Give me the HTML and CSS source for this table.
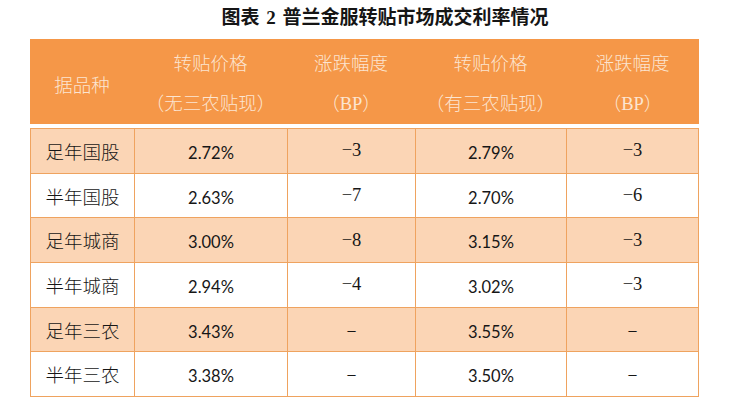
FILE: index.html
```html
<!DOCTYPE html>
<html lang="zh-CN">
<head>
<meta charset="utf-8">
<title>普兰金服转贴市场成交利率情况</title>
<link rel="stylesheet" href="styles.css">
</head>
<body>
<div class="page">
  <h1 class="title">图表 2 普兰金服转贴市场成交利率情况</h1>
  <div class="table">
    <div class="head">
      <div class="hcell span2">据品种</div>
      <div class="hcell top">转贴价格</div>
      <div class="hcell top">涨跌幅度</div>
      <div class="hcell top">转贴价格</div>
      <div class="hcell top">涨跌幅度</div>
      <div class="hcell bot">（无三农贴现）</div>
      <div class="hcell bot">（BP）</div>
      <div class="hcell bot">（有三农贴现）</div>
      <div class="hcell bot">（BP）</div>
    </div>
    <div class="body">
      <div class="cell name alt">足年国股</div><div class="cell num alt">2.72%</div><div class="cell bp alt">−3</div><div class="cell num alt">2.79%</div><div class="cell bp alt">−3</div>
      <div class="cell name">半年国股</div><div class="cell num">2.63%</div><div class="cell bp">−7</div><div class="cell num">2.70%</div><div class="cell bp">−6</div>
      <div class="cell name alt">足年城商</div><div class="cell num alt">3.00%</div><div class="cell bp alt">−8</div><div class="cell num alt">3.15%</div><div class="cell bp alt">−3</div>
      <div class="cell name">半年城商</div><div class="cell num">2.94%</div><div class="cell bp">−4</div><div class="cell num">3.02%</div><div class="cell bp">−3</div>
      <div class="cell name alt">足年三农</div><div class="cell num alt">3.43%</div><div class="cell bp dash alt">–</div><div class="cell num alt">3.55%</div><div class="cell bp dash alt">–</div>
      <div class="cell name">半年三农</div><div class="cell num">3.38%</div><div class="cell bp dash">–</div><div class="cell num">3.50%</div><div class="cell bp dash">–</div>
    </div>
  </div>
</div>
</body>
</html>
```
FILE: styles.css
```css
html, body {
  margin: 0;
  padding: 0;
  background: #ffffff;
}
.page {
  width: 746px;
  height: 405px;
  overflow: hidden;
}
.title {
  margin: 0 0 8px 0;
  padding: 4px 0 0 24px;
  height: 27px;
  line-height: 27px;
  text-align: center;
  font-family: "Liberation Serif", "Noto Sans CJK SC", serif;
  font-size: 19px;
  font-weight: 700;
  word-spacing: 2px;
  color: #151515;
}
.table {
  margin-left: 30px;
  width: 669px;
}
.head {
  display: grid;
  grid-template-columns: 104px 153px 128px 151px 133px;
  grid-template-rows: 43px 42px;
  background: #f59748;
  color: #fce5d1;
  font-family: "Liberation Serif", "Noto Sans CJK SC", serif;
  font-size: 18.5px;
  font-weight: 300;
}
.hcell {
  display: flex;
  align-items: center;
  justify-content: center;
}
.hcell.span2 {
  grid-row: span 2;
  padding-top: 4px;
}
.hcell.top {
  padding-top: 2px;
}
.hcell.bot {
  padding-bottom: 2px;
}
.body {
  margin-top: 4px;
  display: grid;
  grid-template-columns: 103px 152px 127px 150px 131px;
  grid-auto-rows: 43.7px;
  gap: 1px;
  padding: 1px;
  background: #efa35f;
}
.cell {
  display: flex;
  align-items: center;
  justify-content: center;
  background: #ffffff;
  color: #161616;
}
.cell.alt {
  background: #fbd5b5;
}
.name {
  font-family: "Noto Sans CJK SC", sans-serif;
  font-size: 18.5px;
  font-weight: 300;
}
.num {
  font-family: Lato, "Liberation Sans", sans-serif;
  font-size: 16.5px;
  padding-top: 4px;
}
.bp {
  font-family: "Liberation Serif", serif;
  font-size: 18.5px;
}
.dash {
  font-size: 16px;
}
```
